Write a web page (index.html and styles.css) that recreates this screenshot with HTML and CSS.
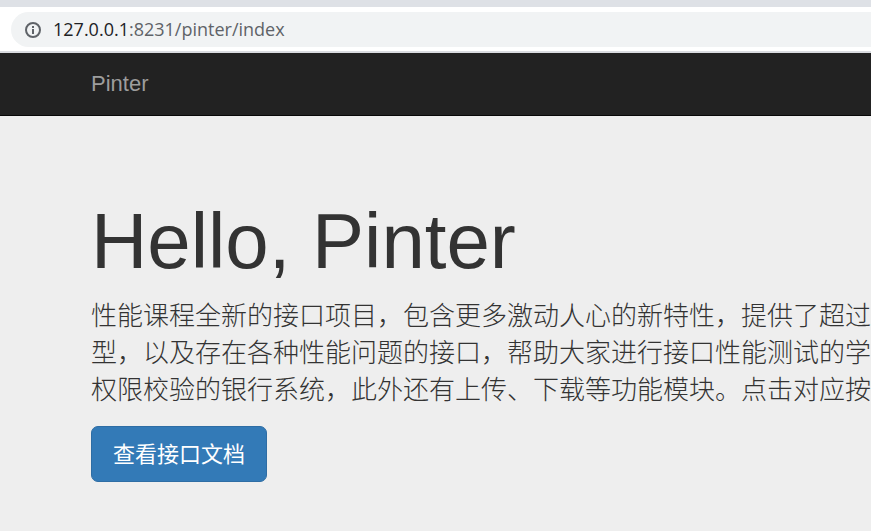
FILE: index.html
```html
<!DOCTYPE html>
<html lang="zh-CN">
<head>
<meta charset="utf-8">
<title>Pinter</title>
<link rel="stylesheet" href="styles.css">
</head>
<body>
<div class="browser-bar">
  <div class="address">
    <svg class="info" viewBox="0 0 18 18" aria-hidden="true"><circle cx="9" cy="9" r="7" fill="none" stroke="currentColor" stroke-width="2"/><path d="M9 8v5M9 5v2" stroke="currentColor" stroke-width="2"/></svg>
    <span class="url"><span class="host">127.0.0.1</span>:8231/pinter/index</span>
  </div>
</div>
<nav class="navbar"><a class="brand" href="#">Pinter</a></nav>
<main class="hero">
  <h1>Hello, Pinter</h1>
  <p class="lead">性能课程全新的接口项目，包含更多激动人心的新特性，提供了超过<br>型，以及存在各种性能问题的接口，帮助大家进行接口性能测试的学<br>权限校验的银行系统，此外还有上传、下载等功能模块。点击对应按</p>
  <button class="button" type="button">查看接口文档</button>
</main>
</body>
</html>
```
FILE: styles.css
```css
* { box-sizing: border-box; }
body {
  margin: 0;
  min-height: 100vh;
  background: #eee;
  color: #333;
  font-family: "Liberation Sans", "Noto Sans CJK SC", sans-serif;
  overflow-x: hidden;
}
.browser-bar {
  padding: 5px 0 4px 11px;
  background: #fff;
  border-top: 7px solid #dee1e6;
  border-bottom: 2px solid #dadce0;
}
.address {
  display: flex;
  align-items: center;
  gap: 11px;
  height: 35px;
  padding-left: 13px;
  border-radius: 18px 0 0 18px;
  background: #f1f3f4;
  color: #5f6368;
}
.info { width: 18px; height: 18px; }
.url {
  font-family: "Open Sans", sans-serif;
  font-size: 18px;
  line-height: 24px;
  padding-bottom: 1px;
}
.host { color: #202124; }
.navbar {
  display: flex;
  align-items: center;
  height: 63px;
  padding-left: 91px;
  background: #222;
  border-bottom: 1px solid #080808;
}
.brand {
  color: #9d9d9d;
  font-size: 22px;
  text-decoration: none;
}
.hero { padding: 82px 0 48px 91px; }
h1 {
  margin: 0 0 11px;
  font-size: 78px;
  font-weight: 400;
  line-height: 86px;
}
.lead {
  margin: 0 0 20px;
  font-size: 26px;
  font-weight: 300;
  line-height: 37px;
  font-family: "Noto Sans CJK SC", sans-serif;
  white-space: nowrap;
}
.button {
  display: block;
  height: 56px;
  padding: 0 21px 4px;
  border: 1px solid #2e6da4;
  border-radius: 7px;
  background: #337ab7;
  color: #fff;
  font-family: "Noto Sans CJK SC", sans-serif;
  font-size: 22px;
}
```
